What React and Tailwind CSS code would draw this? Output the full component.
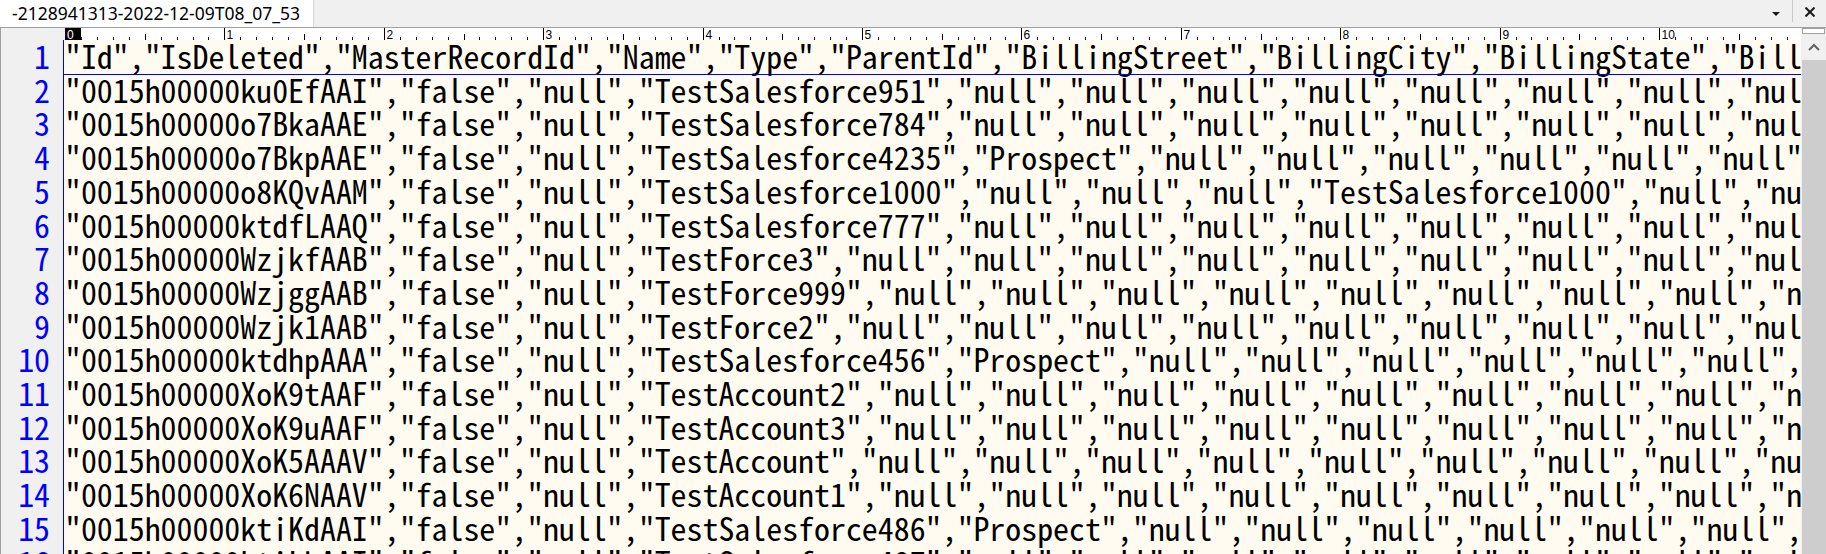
import React from "react";

const NULLS = '"null",'.repeat(14);

const rows = [
  '"Id","IsDeleted","MasterRecordId","Name","Type","ParentId","BillingStreet","BillingCity","BillingState","BillingPostalCode","BillingCountry","BillingLatitude",',
  '"0015h00000ku0EfAAI","false","null","TestSalesforce951",' + NULLS,
  '"0015h00000o7BkaAAE","false","null","TestSalesforce784",' + NULLS,
  '"0015h00000o7BkpAAE","false","null","TestSalesforce4235","Prospect",' + NULLS,
  '"0015h00000o8KQvAAM","false","null","TestSalesforce1000","null","null","null","TestSalesforce1000",' + NULLS,
  '"0015h00000ktdfLAAQ","false","null","TestSalesforce777",' + NULLS,
  '"0015h00000WzjkfAAB","false","null","TestForce3",' + NULLS,
  '"0015h00000WzjggAAB","false","null","TestForce999",' + NULLS,
  '"0015h00000Wzjk1AAB","false","null","TestForce2",' + NULLS,
  '"0015h00000ktdhpAAA","false","null","TestSalesforce456","Prospect",' + NULLS,
  '"0015h00000XoK9tAAF","false","null","TestAccount2",' + NULLS,
  '"0015h00000XoK9uAAF","false","null","TestAccount3",' + NULLS,
  '"0015h00000XoK5AAAV","false","null","TestAccount",' + NULLS,
  '"0015h00000XoK6NAAV","false","null","TestAccount1",' + NULLS,
  '"0015h00000ktiKdAAI","false","null","TestSalesforce486","Prospect",' + NULLS,
  '"0015h00000ktiLbAAI","false","null","TestSalesforce487",' + NULLS,
];

const CW = 15.94;

function Ruler() {
  const ticks = [];
  for (let c = 1; c <= 109; c++) {
    const x = Math.round(CW * c) + 0.5;
    if (c % 10 === 0) {
      ticks.push(<line key={c} x1={x} y1={0} x2={x} y2={12} stroke="#000" strokeWidth="1" />);
      ticks.push(
        <text key={"t" + c} x={x + 2} y={10.5} fontSize="12" fontFamily="'Liberation Sans', Arial, sans-serif" fill="#000">
          {String(c / 10)}
        </text>
      );
    } else if (c % 5 === 0) {
      ticks.push(<line key={c} x1={x} y1={6} x2={x} y2={12} stroke="#000" strokeWidth="1" />);
    } else {
      ticks.push(<line key={c} x1={x} y1={9} x2={x} y2={12} stroke="#000" strokeWidth="1" />);
    }
  }
  return (
    <svg width="1736" height="12" className="block">
      <rect x="0" y="0" width="16" height="12" fill="#000" />
      <text x="2" y="10.5" fontSize="12" fontFamily="'Liberation Sans', Arial, sans-serif" fill="#fff">0</text>
      {ticks}
    </svg>
  );
}

const mono = "[font-family:'Noto_Sans_Mono_CJK_JP','DejaVu_Sans_Mono',monospace]";

export default function App() {
  return (
    <div className="w-[1826px] h-[554px] overflow-hidden bg-[#f0f0f0] flex flex-col">
      {/* tab bar */}
      <div className="h-[27px] flex items-stretch shrink-0">
        <div className="w-[314px] bg-white pl-[12px] flex items-center text-[17.5px] text-black [font-family:'Noto_Sans',sans-serif] whitespace-nowrap border-r border-[#d9d9d9]">
          -2128941313-2022-12-09T08_07_53
        </div>
        <div className="flex-1" />
        <div className="w-[32px] flex items-center justify-center">
          <svg width="10" height="6" className="block">
            <polygon points="1,1 9,1 5,5" fill="#1a1a1a" />
          </svg>
        </div>
        <div className="w-px h-[22px] bg-[#c8c8c8]" />
        <div className="w-[33px] flex items-start justify-center pt-[7px]">
          <svg width="10" height="10" className="block">
            <line x1="0.5" y1="0.5" x2="9.5" y2="9.5" stroke="#1a1a1a" strokeWidth="2" />
            <line x1="9.5" y1="0.5" x2="0.5" y2="9.5" stroke="#1a1a1a" strokeWidth="2" />
          </svg>
        </div>
      </div>
      <div className="h-px bg-[#a0a0a0] shrink-0" />

      {/* main */}
      <div className="flex flex-1 min-h-0">
        <div className="w-[1801px] flex flex-col border-l border-[#a0a0a0] min-h-0">
          {/* ruler */}
          <div className="h-[12px] flex shrink-0">
            <div className="w-[64px] bg-[#f0f0f0]" />
            <div className="flex-1 bg-white overflow-hidden">
              <Ruler />
            </div>
          </div>
          {/* body */}
          <div className="flex flex-1 min-h-0">
            <div className={"w-[63px] bg-[#f0f0f0] border-r border-[#0000ff] pr-[13px] text-right text-[#0000ff] text-[31.88px] leading-[31px] " + mono}>
              {rows.map((_, i) => (
                <div key={i} className="h-[33.71px]">{i + 1}</div>
              ))}
            </div>
            <div className={"flex-1 bg-[#fffbf0] pl-px overflow-hidden text-black text-[31.88px] leading-[31px] " + mono}>
              {rows.map((r, i) => (
                <div key={i} className="h-[33.71px] whitespace-pre relative">
                  {r}
                  {i === 0 && <div className="absolute left-[-1px] right-0 top-[34px] h-px bg-[#0000ff]" />}
                </div>
              ))}
            </div>
          </div>
        </div>

        {/* scrollbar */}
        <div className="w-[25px] flex flex-col">
          <div className="h-[6px] mx-px bg-white border border-[#a0a0a0]" />
          <div className="h-[26px] flex items-center justify-center">
            <svg width="12" height="8" className="block">
              <polyline points="1,7 6,2 11,7" fill="none" stroke="#606060" strokeWidth="2" />
            </svg>
          </div>
          <div className="flex-1 bg-[#cdcdcd] ml-px" />
        </div>
      </div>
    </div>
  );
}
